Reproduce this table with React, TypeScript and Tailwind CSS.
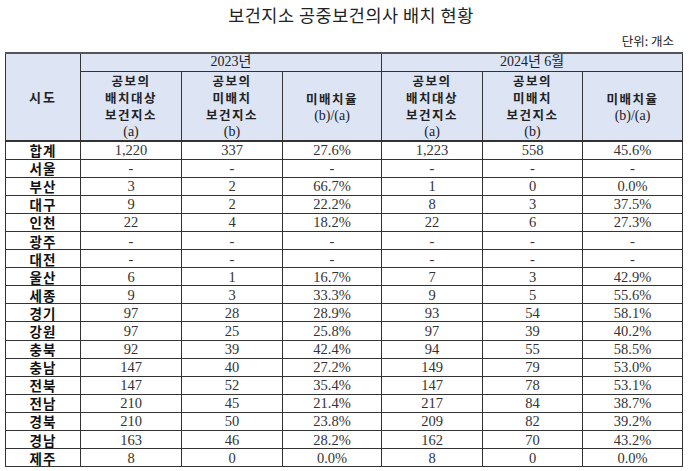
import React from "react";

const rows: [string, string, string, string, string, string, string][] = [
  ["합계", "1,220", "337", "27.6%", "1,223", "558", "45.6%"],
  ["서울", "-", "-", "-", "-", "-", "-"],
  ["부산", "3", "2", "66.7%", "1", "0", "0.0%"],
  ["대구", "9", "2", "22.2%", "8", "3", "37.5%"],
  ["인천", "22", "4", "18.2%", "22", "6", "27.3%"],
  ["광주", "-", "-", "-", "-", "-", "-"],
  ["대전", "-", "-", "-", "-", "-", "-"],
  ["울산", "6", "1", "16.7%", "7", "3", "42.9%"],
  ["세종", "9", "3", "33.3%", "9", "5", "55.6%"],
  ["경기", "97", "28", "28.9%", "93", "54", "58.1%"],
  ["강원", "97", "25", "25.8%", "97", "39", "40.2%"],
  ["충북", "92", "39", "42.4%", "94", "55", "58.5%"],
  ["충남", "147", "40", "27.2%", "149", "79", "53.0%"],
  ["전북", "147", "52", "35.4%", "147", "78", "53.1%"],
  ["전남", "210", "45", "21.4%", "217", "84", "38.7%"],
  ["경북", "210", "50", "23.8%", "209", "82", "39.2%"],
  ["경남", "163", "46", "28.2%", "162", "70", "43.2%"],
  ["제주", "8", "0", "0.0%", "8", "0", "0.0%"],
];

const sans = "font-['Noto_Sans_CJK_KR',sans-serif]";
const serif = "font-['Liberation_Serif','Noto_Sans_CJK_KR',serif]";

function HeadCell({ lines, last }: { lines: string[]; last: string }) {
  return (
    <th className="border border-[#333] bg-[#dde4f4] p-0 font-normal align-middle">
      <div className="flex flex-col items-center">
        {lines.map((l) => (
          <span key={l} className={`${sans} font-bold text-[12.5px] leading-[17px] h-[17px] text-[#222] tracking-[1.5px]`}>
            {l}
          </span>
        ))}
        <span className={`${serif} text-[14px] leading-[17px] h-[17px] text-[#222]`}>{last}</span>
      </div>
    </th>
  );
}

function RateCell() {
  return (
    <th className="border border-[#333] bg-[#dde4f4] p-0 font-normal align-middle">
      <div className="flex flex-col items-center pt-[2px]">
        <span className={`${sans} font-bold text-[12.5px] leading-[17px] h-[17px] text-[#222] tracking-[1.5px]`}>미배치율</span>
        <span className={`${serif} text-[14px] leading-[17px] h-[17px] text-[#222]`}>(b)/(a)</span>
      </div>
    </th>
  );
}

export default function App() {
  return (
    <div className="w-[700px] h-[471px] bg-white overflow-hidden">
      <div className={`${sans} text-[17.5px] text-[#222] text-center pt-[3px] h-[30px] leading-[24px] pl-[2px] tracking-[0.5px]`}>
        보건지소 공중보건의사 배치 현황
      </div>
      <div className={`${sans} text-[12.5px] text-[#222] text-right pr-[26px] h-[22px] leading-[22px]`}>
        단위: 개소
      </div>
      <table className="ml-[5px] border-collapse table-fixed w-[677px]">
        <colgroup>
          <col className="w-[75px]" />
          <col className="w-[101px]" />
          <col className="w-[101px]" />
          <col className="w-[99px]" />
          <col className="w-[101px]" />
          <col className="w-[100px]" />
          <col className="w-[100px]" />
        </colgroup>
        <thead>
          <tr className="h-[18px]">
            <th rowSpan={2} className={`border border-[#333] border-t-2 border-t-[#555] bg-[#dde4f4] p-0 ${sans} font-bold text-[13px] text-[#222] tracking-[2px]`}>
              시도
            </th>
            <th colSpan={3} className={`border border-[#333] border-t-2 border-t-[#555] bg-[#dde4f4] p-0 font-normal ${serif} text-[14px] leading-[16px] text-[#222]`}>
              2023년
            </th>
            <th colSpan={3} className={`border border-[#333] border-t-2 border-t-[#555] bg-[#dde4f4] p-0 font-normal ${serif} text-[14px] leading-[16px] text-[#222]`}>
              2024년 6월
            </th>
          </tr>
          <tr className="h-[70px]">
            <HeadCell lines={["공보의", "배치대상", "보건지소"]} last="(a)" />
            <HeadCell lines={["공보의", "미배치", "보건지소"]} last="(b)" />
            <RateCell />
            <HeadCell lines={["공보의", "배치대상", "보건지소"]} last="(a)" />
            <HeadCell lines={["공보의", "미배치", "보건지소"]} last="(b)" />
            <RateCell />
          </tr>
        </thead>
        <tbody>
          {rows.map((r, i) => (
            <tr key={r[0]} className="h-[18.1px]">
              <td className={`border border-[#333] ${i === 0 ? "border-t-2" : ""} p-0 text-center ${sans} font-bold text-[13.5px] leading-[16px] text-[#111] tracking-[1px]`}>
                {r[0]}
              </td>
              {r.slice(1).map((v, j) => (
                <td
                  key={j}
                  className={`border border-[#333] ${i === 0 ? "border-t-2" : ""} p-0 text-center ${serif} text-[14.5px] leading-[16px] text-[#333]`}
                >
                  {v}
                </td>
              ))}
            </tr>
          ))}
        </tbody>
      </table>
    </div>
  );
}
